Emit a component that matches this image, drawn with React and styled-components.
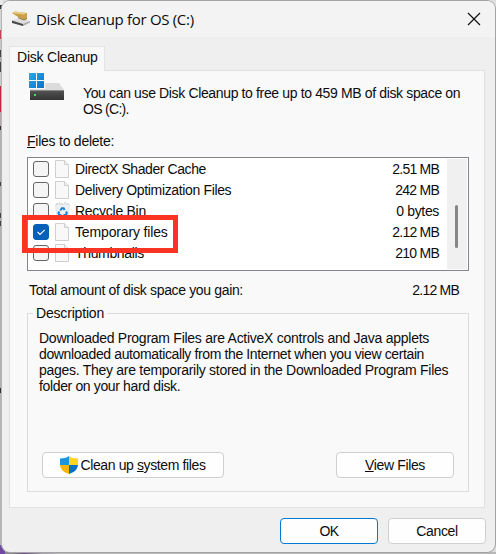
import React, { useState } from "react";
import styled, { createGlobalStyle } from "styled-components";

const COLOUR = {
  window: "#efefef",
  titleBar: "#f3f3f3",
  page: "#f9f9f9",
  line: "#dcdcdc",
  listBorder: "#85838c",
  text: "#0c0c0c",
  accent: "#0560b8",
  highlight: "#fb3322",
};

const GlobalStyle = createGlobalStyle`
  html, body {
    margin: 0;
    padding: 0;
    overflow: hidden;
  }

  body {
    background:
      linear-gradient(#6f4a9e, #6f4a9e) 0 545px / 5px 9px no-repeat,
      linear-gradient(to right, #8a8a8a 0 12px, #6b4f8d 24px, #a9a4b0 42px, #b9b9b9 60px) 0 552px / 100% 2px no-repeat,
      linear-gradient(
        #e9e9e9 0 5px, #333 5px 9px, #d5d5d5 9px 30px, #c8404f 30px 39px,
        #c9c9c9 39px 50px, #444 50px 57px, #aaa 57px 62px, #444 62px 72px,
        #ccc 72px 86px, #c2263a 86px 112px, #b9a9aa 112px 126px, #333 126px 130px,
        #b5b0b0 130px 182px, #444 182px 186px, #b5b0b0 186px 213px, #444 213px 218px,
        #b0abab 218px 221px, #444 221px 226px, #b5b0b0 226px 388px, #333 388px 393px, #b5b5b5 393px 554px
      ) 0 0 / 3px 545px no-repeat,
      #dedede;
  }

  *, *::before, *::after {
    box-sizing: border-box;
  }
`

const Dialog = styled.div`
  display: flex;
  flex-direction: column;
  width: 495px;
  height: 553px;
  margin-left: 1px;
  border: 1px solid #a3a3a3;
  border-left-color: #b4b4b4;
  border-radius: 9px;
  background-color: ${COLOUR.window};
  color: ${COLOUR.text};
  font: 14px/16px "Liberation Sans", Arial, sans-serif;
  overflow: hidden;
`

const TitleBar = styled.header`
  display: flex;
  align-items: center;
  height: 36px;
  padding: 0 14px 0 9px;
  background-color: ${COLOUR.titleBar};
`

const Title = styled.h1`
  flex: 1;
  margin: 0 0 0 5px;
  font: 400 15px/20px "Open Sans", "Noto Sans", sans-serif;
  letter-spacing: -0.31px;
`

const Text = styled.span`
  letter-spacing: ${({ $spacing = -0.35 }) => $spacing}px;
`

const Tabs = styled.nav`
  display: flex;
  height: 33px;
  padding: 9px 0 0 7px;
`

const Tab = styled.div`
  width: 96px;
  height: 25px;
  padding: 2px 0 0 7px;
  border: 1px solid #e4e4e4;
  border-bottom: none;
  background-color: ${COLOUR.page};
  z-index: 1;
  white-space: nowrap;
`

const Page = styled.main`
  height: 438px;
  margin: 0 10px 0 7px;
  padding: 0 15px 0 17px;
  border: 1px solid #e1e1e1;
  background-color: ${COLOUR.page};
`

const Intro = styled.div`
  display: flex;
  height: 62px;
  padding: 2px 0 0 2px;

  svg {
    flex-shrink: 0;
  }
`

const IntroText = styled.p`
  margin: 12px 0 0 18px;
  white-space: nowrap;
`

const Label = styled.div`
  height: 24px;
`

const List = styled.div`
  position: relative;
  display: flex;
  height: 114px;
  border: 1px solid ${COLOUR.listBorder};
  background-color: #fff;
`

const Rows = styled.ul`
  flex: 1;
  margin: 0;
  padding: 0 8px 0 5px;
  list-style: none;
`

const Row = styled.li`
  display: flex;
  align-items: center;
  height: 21px;
`

const RowName = styled(Text)`
  flex: 1;
  margin-left: 5px;
`

const CheckBox = styled.button`
  display: flex;
  width: 16px;
  height: 16px;
  margin-right: 6px;
  padding: 0;
  border: 1px solid ${({ $checked }) => $checked ? COLOUR.accent : "#666"};
  border-radius: 3px;
  background-color: ${({ $checked }) => $checked ? COLOUR.accent : "#f5f5f5"};
`

const ScrollTrack = styled.div`
  width: 20px;
  margin: 1px 1px 1px 0;
  padding: 46px 0 0 8px;
  background-color: #f0f0f0;
`

const ScrollThumb = styled.div`
  width: 3px;
  height: 43px;
  border-radius: 2px;
  background-color: #868686;
`

const Highlight = styled.div`
  position: absolute;
  top: 57px;
  left: -6px;
  width: 156px;
  height: 38px;
  border: 5px solid ${COLOUR.highlight};
  pointer-events: none;
`

const Total = styled.div`
  display: flex;
  justify-content: space-between;
  height: 34px;
  padding: 11px 10px 0 2px;
`

const Group = styled.fieldset`
  min-width: 0;
  height: 187px;
  margin: 0;
  padding: 0 14px 0 11px;
  border: 1px solid ${COLOUR.line};
`

const Legend = styled.legend`
  height: 16px;
  margin-left: -6px;
  padding: 0 3px;
`

const Description = styled.p`
  height: 122px;
  margin: 9px 0 0;
  white-space: nowrap;
`

const Actions = styled.div`
  display: flex;
  justify-content: space-between;
  padding-left: 3px;
`

const Button = styled.button`
  display: flex;
  align-items: center;
  justify-content: center;
  gap: 2px;
  width: ${({ $width }) => $width}px;
  height: 26px;
  padding: 0;
  border: 1px solid ${({ $primary }) => $primary ? "#0078d4" : "#cfcfcf"};
  border-radius: 4px;
  background-color: #fefefe;
  color: ${COLOUR.text};
  font: inherit;
`

const Footer = styled.footer`
  display: flex;
  justify-content: flex-end;
  gap: 10px;
  padding: 10px 9px 0 0;
`

const CleanupIcon = () => (
  <svg width="20" height="16" viewBox="0 0 20 16">
    <path d="M1 9.500 8 7l11 3-7 3z" fill="#dedede" />
    <path d="M1 9.500 12 13v2L1 12z" fill="#4a4a4a" />
    <path d="m12 13 7-3v1.500L12 15z" fill="#aaa" />
    <path d="m1 2 3-1.500 12 1.500v5.500l-3 1-6-2.500z" fill="#c7a048" />
    <path d="m1 2 3-1.500 11 1.500-2 1.500z" fill="#ead18c" />
    <path d="m7 6.500 6 2.500 3-1.500" fill="none" stroke="#8d6e2c" />
  </svg>
)

const CloseIcon = () => (
  <svg width="14" height="14" viewBox="0 0 14 14">
    <path d="m1 1 12 12M13 1 1 13" stroke="#111" strokeWidth="1.2" />
  </svg>
)

const DriveIcon = () => (
  <svg width="36" height="28" viewBox="0 0 36 28">
    <defs>
      <linearGradient id="win" x2="1" y2="1">
        <stop stopColor="#29a8ed" />
        <stop offset="1" stopColor="#0873ca" />
      </linearGradient>
      <linearGradient id="drive" x2="0" y2="1">
        <stop stopColor="#555" />
        <stop offset="1" stopColor="#333" />
      </linearGradient>
    </defs>
    <path d="M6 10h24l5 7H1z" fill="#dcdcdc" />
    <path d="M1 17h34v10H1z" fill="url(#drive)" />
    <path d="M1 17h34v1H1z" fill="#888" />
    <path d="M0 0h16v16H0z" fill="#f9f9f9" />
    <path d="M0 0h7v7H0zM8 0h7v7H8zM0 8h7v7H0zM8 8h7v7H8z" fill="url(#win)" />
    <path d="M5 21h2v2H5z" fill="#49e052" />
  </svg>
)

const FileIcon = () => (
  <svg width="15" height="18" viewBox="0 0 15 18">
    <path d="M.5.5h9l4 4v13H.5z" fill="#f8f8f8" stroke="#cfcfcf" />
    <path d="M9.5.5v4h4" fill="#eee" stroke="#cfcfcf" />
  </svg>
)

const RecycleIcon = () => (
  <svg width="15" height="18" viewBox="0 0 15 18">
    <path d="M.5 2.500h14l-2 15h-10z" fill="#eef1f3" stroke="#e3e6e8" />
    <path d="M1 2.500 4 .8l3 1.400L10 .6l4 1.900" fill="none" stroke="#bbb" strokeDasharray="2 1" />
    <path d="m5.300 8.500 1.500-2.300h1.800l1 1.800M11 9.500l.8 1.700-1 1.700H8.500M6.300 13H4.400l-1-1.700 1-1.800" fill="none" stroke="#1683d8" strokeWidth="2" />
  </svg>
)

const CheckIcon = () => (
  <svg width="14" height="14" viewBox="0 0 14 14">
    <path d="m3.500 7 2.500 2.500 4.700-4.700" fill="none" stroke="#fff" strokeWidth="1.1" />
  </svg>
)

const ShieldIcon = () => (
  <svg width="18" height="18" viewBox="0 0 18 18">
    <path d="M9 0C6.500 1.800 3.500 2.500 0 2.500V9h9z" fill="#1e94da" />
    <path d="M9 0c2.500 1.800 5.500 2.500 9 2.500V9H9z" fill="#ffd51d" />
    <path d="M0 9c.5 4.500 4 7.500 9 9V9z" fill="#f8b60c" />
    <path d="M18 9c-.5 4.500-4 7.500-9 9V9z" fill="#0871c5" />
  </svg>
)

const initialFiles = [
  { name: "DirectX Shader Cache", size: "2.51 MB", nameSpacing: -0.42, sizeSpacing: -0.78 },
  { name: "Delivery Optimization Files", size: "242 MB", sizeSpacing: -0.75 },
  { name: "Recycle Bin", size: "0 bytes", nameSpacing: -0.27, icon: RecycleIcon },
  { name: "Temporary files", size: "2.12 MB", checked: true, nameSpacing: -0.15, sizeSpacing: -0.78 },
  { name: "Thumbnails", size: "210 MB", sizeSpacing: -0.75 },
];

const FileRow = ({ name, size, checked, nameSpacing, sizeSpacing, icon: Icon = FileIcon, onToggle }) => (
  <Row>
    <CheckBox $checked={checked} onClick={onToggle}>{checked && <CheckIcon />}</CheckBox>
    <Icon />
    <RowName $spacing={nameSpacing}>{name}</RowName>
    <Text $spacing={sizeSpacing}>{size}</Text>
  </Row>
)

export default function App() {
  const [files, setFiles] = useState(initialFiles);
  const toggle = name => setFiles(files.map(f => f.name === name ? { ...f, checked: !f.checked } : f));

  return (
    <>
      <GlobalStyle />
      <Dialog>
        <TitleBar>
          <CleanupIcon />
          <Title>Disk Cleanup for OS (C:)</Title>
          <CloseIcon />
        </TitleBar>
        <Tabs><Tab><Text $spacing={-0.22}>Disk Cleanup</Text></Tab></Tabs>
        <Page>
          <Intro>
            <DriveIcon />
            <IntroText>
              <Text $spacing={-0.36}>You can use Disk Cleanup to free up to 459 MB of disk space on</Text><br />
              <Text $spacing={-0.7}>OS (C:).</Text>
            </IntroText>
          </Intro>
          <Label><Text $spacing={-0.24}><u>F</u>iles to delete:</Text></Label>
          <List>
            <Rows>
              {files.map(file => <FileRow key={file.name} {...file} onToggle={() => toggle(file.name)} />)}
            </Rows>
            <ScrollTrack><ScrollThumb /></ScrollTrack>
            <Highlight />
          </List>
          <Total>
            <Text>Total amount of disk space you gain:</Text>
            <Text $spacing={-0.78}>2.12 MB</Text>
          </Total>
          <Group>
            <Legend><Text $spacing={-0.18}>Description</Text></Legend>
            <Description>
              <Text $spacing={-0.26}>Downloaded Program Files are ActiveX controls and Java applets</Text><br />
              <Text $spacing={-0.38}>downloaded automatically from the Internet when you view certain</Text><br />
              <Text $spacing={-0.28}>pages. They are temporarily stored in the Downloaded Program Files</Text><br />
              <Text $spacing={-0.36}>folder on your hard disk.</Text>
            </Description>
            <Actions>
              <Button $width={182}><ShieldIcon /><Text $spacing={-0.38}>Clean up <u>s</u>ystem files</Text></Button>
              <Button $width={118}><Text><u>V</u>iew Files</Text></Button>
            </Actions>
          </Group>
        </Page>
        <Footer>
          <Button $primary $width={98}><Text $spacing={-0.6}>OK</Text></Button>
          <Button $width={98}><Text>Cancel</Text></Button>
        </Footer>
      </Dialog>
    </>
  )
}
